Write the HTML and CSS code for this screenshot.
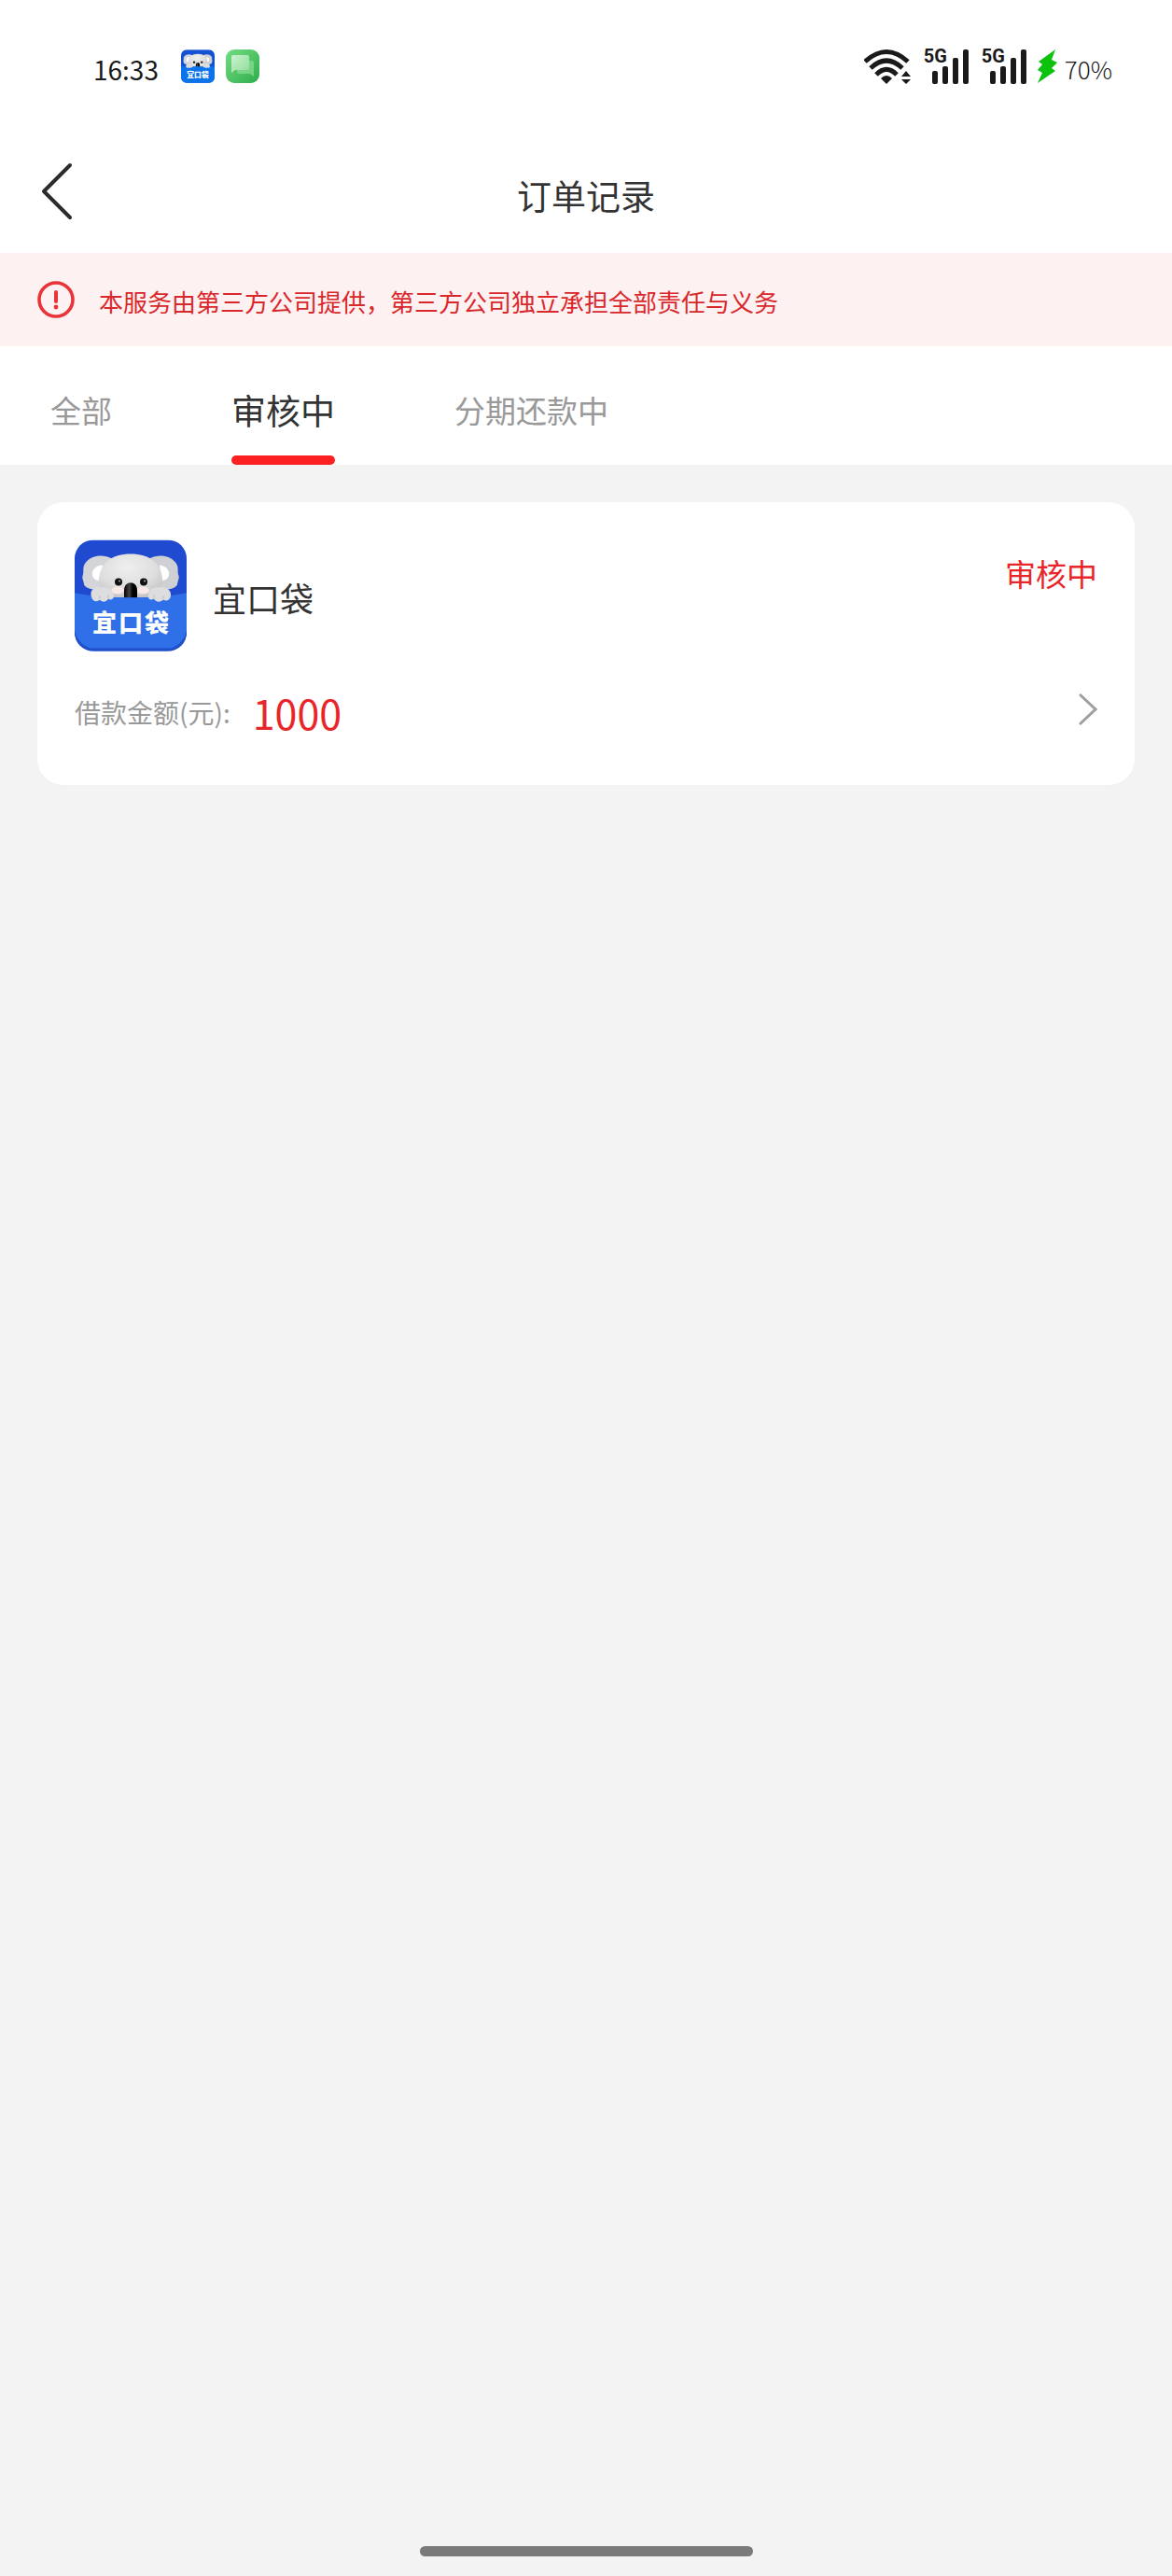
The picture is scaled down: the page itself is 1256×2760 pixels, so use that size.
FILE: index.html
```html
<!DOCTYPE html>
<html lang="zh-CN">

<head>
  <meta charset="utf-8">
  <title>订单记录</title>
  <meta name="viewport" content="width=device-width, initial-scale=1">
  <link rel="stylesheet" href="styles.css">
</head>

<body>
  <!-- shared icons -->
  <svg class="sprite" aria-hidden="true">
    <defs>
      <linearGradient id="green" x1="0" y1="0" x2="1" y2="1">
        <stop offset="0" stop-color="#74dc84" />
        <stop offset="1" stop-color="#2fae4a" />
      </linearGradient>
      <linearGradient id="bubble" x1="0" y1="0" x2="1" y2="1">
        <stop offset="0" stop-color="#d9f7dc" />
        <stop offset="1" stop-color="#8fdd99" />
      </linearGradient>
      <radialGradient id="fur" cx="0.45" cy="0.3" r="0.75">
        <stop offset="0" stop-color="#efefef" />
        <stop offset="0.6" stop-color="#dedede" />
        <stop offset="1" stop-color="#c2c2c4" />
      </radialGradient>
      <linearGradient id="nose" x1="0" y1="0" x2="1" y2="0">
        <stop offset="0" stop-color="#000" />
        <stop offset="0.4" stop-color="#444" />
        <stop offset="0.65" stop-color="#000" />
      </linearGradient>
      <clipPath id="tile">
        <rect width="120" height="119" rx="20" />
      </clipPath>
    </defs>

    <symbol id="koala-head" viewBox="0 0 120 120">
      <path d="M40 20C31 15 18 16 12 24C8 29 10 33 9 37C7 41 10 44 10 48C12 52 20 53 25 54L40 50Z" fill="#d4d5d8" />
      <path d="M80 20C89 15 102 16 108 24C112 29 110 33 111 37C113 41 110 44 110 48C108 52 100 53 95 54L80 50Z" fill="#cfd0d3" />
      <path d="M30 27C22 27 18 33 19 38C20 42 23 44 27 43Z" fill="#fff" />
      <path d="M91 27C99 28 102 34 101 38C100 42 97 44 93 43Z" fill="#fff" />
      <path d="M60 15C40 15 27 25 26 42C26 53 34 62 46 62H76C87 62 94 53 94 42C93 25 80 15 60 15Z" fill="url(#fur)" />
      <ellipse cx="46" cy="54" rx="7" ry="4" fill="#f8e9e6" />
      <ellipse cx="73" cy="54" rx="7" ry="4" fill="#f8e9e6" />
      <circle cx="47" cy="45" r="4" fill="#111" />
      <circle cx="74" cy="45" r="4" fill="#111" />
      <circle cx="48" cy="44" r="1" fill="#aaa" />
      <circle cx="75" cy="44" r="1" fill="#aaa" />
      <path d="M53 62V54C53 43 67 43 67 54V62Z" fill="url(#nose)" />
    </symbol>

    <symbol id="koala-paws" viewBox="0 0 120 120">
      <path d="M18 61C16 55 20 50 27 51C35 49 42 54 42 60C42 64 38 65 36 63C34 67 29 67 27 64C24 67 19 66 18 61Z" fill="#dddde0" />
      <path d="M79 61C78 54 85 49 92 51C99 50 104 55 103 60C102 65 98 66 95 64C92 67 87 67 85 63C82 65 79 64 79 61Z" fill="#dddde0" />
      <path d="M27 63V60M36 62V59M85 62V59M95 63V60" stroke="#bbb" stroke-width="1" fill="none" />
    </symbol>

    <symbol id="signal" viewBox="0 0 48 38">
      <g fill="#1a1a1a">
        <rect x="9" y="24" width="6" height="14" rx="2" />
        <rect x="20" y="19" width="6" height="19" rx="2" />
        <rect x="31" y="10" width="6" height="28" rx="2" />
        <rect x="42" y="1" width="6" height="37" rx="2" />
      </g>
    </symbol>
  </svg>

  <div class="status-bar">
    <div class="status-left">
      <span class="time">16:33</span>
      <svg class="app-icon" viewBox="0 0 120 119">
        <g clip-path="url(#tile)">
          <rect width="120" height="120" fill="#1450d2" />
          <use href="#koala-head" width="120" height="120" />
          <path d="M0 60H120V120H0Z" fill="#0b74ea" />
          <use href="#koala-paws" width="120" height="120" />
          <text class="logo-text" x="60" y="100" text-anchor="middle">宜口袋</text>
        </g>
      </svg>
      <svg class="app-icon" viewBox="0 0 36 36">
        <rect width="36" height="36" rx="9" fill="url(#green)" />
        <path d="M18 12H28Q30 12 30 14V29L26 26H14Q12 26 12 24V18Z" fill="#8edb99" opacity="0.7" />
        <path d="M8 6H23Q25 6 25 8V20Q25 22 23 22H10L6 25V8Q6 6 8 6Z" fill="url(#bubble)" opacity="0.9" />
      </svg>
    </div>
    <div class="status-right">
      <svg class="wifi" viewBox="0 0 50 38">
        <g fill="none" stroke="#1a1a1a" stroke-width="5">
          <path d="M1 14Q24 -7 47 14" />
          <path d="M7 21Q24 5 41 21" />
          <path d="M13 28Q24 17 35 28" />
        </g>
        <path d="M18 32Q24 26 30 32L24 38Z" fill="#1a1a1a" />
        <path d="M40 30L45 24L50 30ZM40 33H50L45 38Z" fill="#1a1a1a" />
      </svg>
      <span class="mobile">
        <svg class="signal"><use href="#signal" /></svg>
        <span class="net">5G</span>
      </span>
      <span class="mobile">
        <svg class="signal"><use href="#signal" /></svg>
        <span class="net">5G</span>
      </span>
      <svg class="bolt" viewBox="0 0 22 38">
        <path d="M20 1L2 14L6 17L1 23L6 26L1 37L20 24L16 21L22 15L16 12Z" fill="#0cc20c" />
      </svg>
      <span class="battery">70%</span>
    </div>
  </div>

  <header class="nav-bar">
    <button class="back" type="button" aria-label="返回">
      <svg viewBox="0 0 34 62">
        <path d="M31 3L3 31L31 59" fill="none" stroke="#2b2b2b" stroke-width="4" stroke-linecap="round" stroke-linejoin="round" />
      </svg>
    </button>
    <h1>订单记录</h1>
  </header>

  <div class="notice">
    <svg class="notice-icon" viewBox="0 0 40 40">
      <circle cx="20" cy="20" r="18" fill="none" stroke="#e83338" stroke-width="3.6" />
      <path d="M20 12V22" stroke="#e83338" stroke-width="4" stroke-linecap="round" />
      <circle cx="20" cy="28" r="2.4" fill="#e83338" />
    </svg>
    <p>本服务由第三方公司提供，第三方公司独立承担全部责任与义务</p>
  </div>

  <nav class="tabs">
    <button class="tab" type="button">全部</button>
    <button class="tab active" type="button">审核中</button>
    <button class="tab" type="button">分期还款中</button>
  </nav>

  <main class="order-list">
    <a class="order-card" href="#">
      <div class="order-head">
        <svg class="logo" viewBox="0 0 120 119">
          <g clip-path="url(#tile)">
            <rect width="120" height="120" fill="#204bd0" />
            <use href="#koala-head" width="120" height="120" />
            <path d="M0 57Q60 67 120 57V120H0Z" fill="#1f4fc9" />
            <path d="M0 57Q60 67 120 57V97Q117 111 104 116H16Q3 111 0 97Z" fill="#2f70e8" />
            <use href="#koala-paws" width="120" height="120" />
            <text class="logo-text" x="60" y="98" text-anchor="middle">宜<tspan dx="2">口</tspan><tspan dx="2">袋</tspan></text>
          </g>
        </svg>
        <h2>宜口袋</h2>
        <span class="order-status">审核中</span>
      </div>
      <div class="order-body">
        <span class="label">借款金额(元):</span>
        <span class="amount">1000</span>
        <svg class="arrow" viewBox="0 0 20 34">
          <path d="M1 1L18 17L1 33" fill="none" stroke="#a0a0a0" stroke-width="3" />
        </svg>
      </div>
    </a>
  </main>

  <div class="home-bar"></div>
</body>

</html>
```
FILE: styles.css
```css
* {
  box-sizing: border-box;
}

body {
  display: flex;
  flex-direction: column;
  min-height: 100vh;
  margin: 0;
  background: #f3f3f3;
  color: #333;
  font-family: "Noto Sans CJK SC", "Noto Sans", sans-serif;
}

button {
  padding: 0;
  border: none;
  background: none;
  font-family: inherit;
  cursor: pointer;
}

h1,
h2,
p {
  margin: 0;
  font-weight: normal;
}

svg {
  display: block;
  flex: none;
}

.sprite {
  position: absolute;
  width: 0;
  height: 0;
}

/* status bar */
.status-bar {
  display: flex;
  justify-content: space-between;
  align-items: center;
  height: 142px;
  padding: 0 64px 0 100px;
  background: #fff;
  color: #1a1a1a;
}

.status-left {
  display: flex;
  align-items: center;
  gap: 12px;
}

.time {
  margin-right: 12px;
  padding-top: 6px;
  font-size: 28px;
  line-height: 32px;
}

.app-icon {
  width: 36px;
  height: 36px;
}

.status-right {
  display: flex;
  align-items: center;
  gap: 14px;
}

.wifi {
  width: 50px;
  height: 38px;
}

.mobile {
  position: relative;
}

.signal {
  width: 48px;
  height: 38px;
}

.net {
  position: absolute;
  top: 0;
  left: 0;
  font-family: Roboto, sans-serif;
  font-size: 20px;
  font-weight: bold;
  line-height: 16px;
}

.bolt {
  width: 22px;
  height: 38px;
  margin-left: -3px;
}

.battery {
  margin-left: -6px;
  padding-top: 6px;
  font-size: 26px;
  font-weight: 300;
  line-height: 32px;
}

/* title */
.nav-bar {
  position: relative;
  display: flex;
  justify-content: center;
  align-items: center;
  height: 129px;
  background: #fff;
}

.nav-bar h1 {
  padding-top: 4px;
  font-size: 37px;
  line-height: 52px;
}

.back {
  position: absolute;
  top: 32px;
  left: 44px;
}

.back svg {
  width: 34px;
  height: 62px;
}

.notice {
  display: flex;
  align-items: center;
  gap: 26px;
  padding: 30px 40px;
  background: #fef1f1;
  color: #d9282c;
  font-size: 26px;
  line-height: 36px;
}

.notice p {
  padding-top: 4px;
}

.notice-icon {
  width: 40px;
  height: 40px;
}

/* tabs */
.tabs {
  display: flex;
  gap: 128px;
  height: 127px;
  padding: 0 54px;
  background: #fff;
}

.tab {
  position: relative;
  padding-top: 8px;
  color: #999;
  font-size: 33px;
}

.tab.active {
  color: #333;
  font-size: 37px;
}

.tab.active::after {
  content: "";
  position: absolute;
  left: 0;
  right: 0;
  bottom: 0;
  height: 10px;
  border-radius: 5px;
  background: #fc2023;
}

/* orders */
.order-list {
  flex: 1;
  padding: 40px;
}

.order-card {
  display: block;
  padding: 40px;
  border-radius: 28px;
  background: #fff;
  color: inherit;
  text-decoration: none;
}

.order-head {
  display: flex;
  align-items: center;
}

.logo {
  width: 120px;
  height: 120px;
}

.logo-text {
  fill: #fff;
  font-size: 26px;
  font-weight: 900;
}

.order-head h2 {
  padding: 4px 0 0 28px;
  font-size: 36px;
  line-height: 52px;
}

.order-status {
  align-self: flex-start;
  margin-left: auto;
  color: #e8262a;
  font-size: 33px;
  line-height: 72px;
}

.order-body {
  display: flex;
  align-items: center;
  gap: 24px;
  margin-top: 27px;
  line-height: 76px;
}

.label {
  color: #999;
  font-size: 28px;
}

.amount {
  color: #e8262a;
  font-size: 43px;
}

.arrow {
  width: 20px;
  height: 34px;
  margin: 0 0 6px auto;
}

.home-bar {
  width: 357px;
  height: 11px;
  margin: 0 auto 21px;
  border-radius: 6px;
  background: #7a7a7a;
}
```
